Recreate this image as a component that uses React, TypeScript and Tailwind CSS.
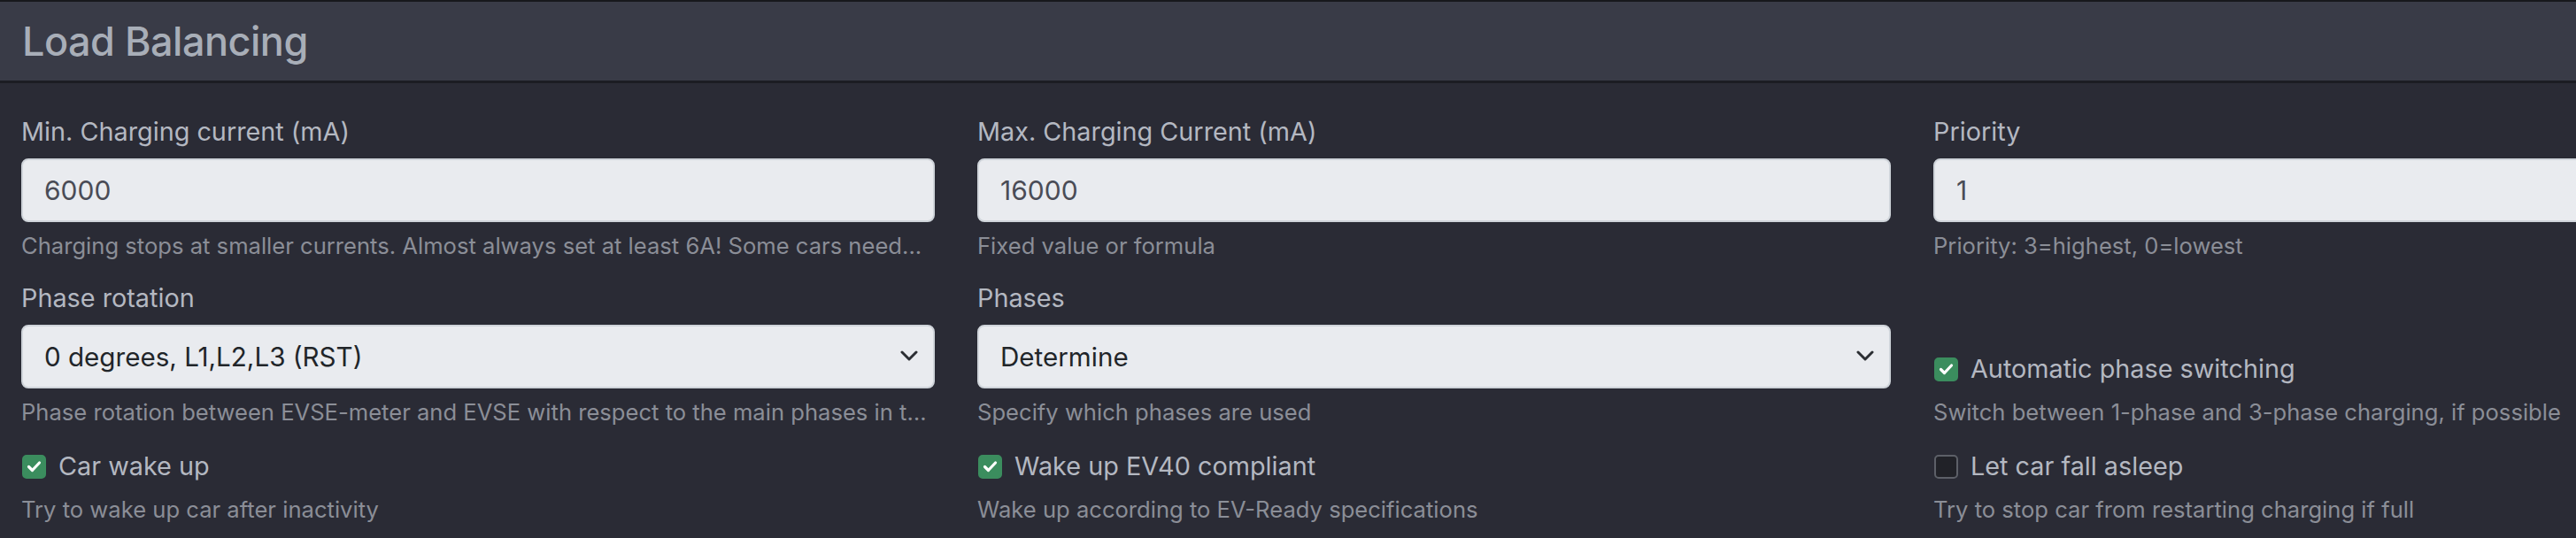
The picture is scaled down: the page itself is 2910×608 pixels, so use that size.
import type { ReactNode } from "react";

const font = { fontFamily: "Inter, 'Noto Sans', sans-serif" };

const Label = ({ children }: { children: ReactNode }) => (
	<div className="h-[44px] text-[28.8px] leading-[44px] text-[#b4b8c1] mb-[8px]">{children}</div>
);

const Help = ({ children }: { children: ReactNode }) => (
	<div className="h-[38px] text-[25.6px] leading-[38px] text-[#8b8e97] truncate">{children}</div>
);

const TextInput = ({ value }: { value: string }) => (
	<input
		type="text"
		defaultValue={value}
		className="block w-full h-[72px] rounded-[8px] border-2 border-[#cfd4da] bg-[#e9ebef] px-[24px] text-[30px] text-[#4a4c56] outline-none mb-[8px]"
	/>
);

const Select = ({ value }: { value: string }) => (
	<div className="relative mb-[8px]">
		<select
			defaultValue={value}
			className="block w-full h-[72px] appearance-none rounded-[8px] border-2 border-[#cfd4da] bg-[#e9ebef] px-[24px] text-[29.6px] text-[#212529] outline-none"
		>
			<option>{value}</option>
		</select>
		<svg
			className="absolute right-[19px] top-[29px] pointer-events-none"
			width="20"
			height="13"
			viewBox="0 0 20 13"
			fill="none"
		>
			<path d="M2 2l8 8 8-8" stroke="#2b2e33" strokeWidth="3" strokeLinecap="round" strokeLinejoin="round" />
		</svg>
	</div>
);

const Check = ({ checked, label }: { checked: boolean; label: string }) => (
	<div className="flex items-center h-[44px] mb-[8px]">
		<span
			className={
				checked
					? "ml-px flex items-center justify-center w-[27px] h-[27px] rounded-[5px] bg-[#3b8d5e] border-2 border-[#3b8d5e]"
					: "ml-px w-[27px] h-[27px] rounded-[5px] bg-[#212228] border-2 border-[#5d6068]"
			}
		>
			{checked && (
				<svg width="17" height="14" viewBox="0 0 17 14" fill="none">
					<path d="M2.5 7.5l4 4 8-8.5" stroke="#ffffff" strokeWidth="3.2" strokeLinecap="round" strokeLinejoin="round" />
				</svg>
			)}
		</span>
		<span className="ml-[14px] text-[28.8px] leading-[44px] text-[#b4b8c1]">{label}</span>
	</div>
);

export default function App() {
	return (
		<div className="w-[2910px] h-[608px] overflow-hidden bg-[#2a2b35]" style={font}>
			<div className="h-[2px] bg-[#17181c]" />
			<div className="h-[92px] flex items-center px-[25px] bg-[#393b47] border-b-[3px] border-[#1c1d23]">
				<h1 className="text-[45px] leading-none font-medium text-[#a8aeb8] tracking-[-0.5px]">Load Balancing</h1>
			</div>

			<div className="pt-[33px] w-[3240px] grid grid-cols-[1080px_1080px_1080px]">
				<div className="px-[24px] mb-[18px]">
					<Label>Min. Charging current (mA)</Label>
					<TextInput value="6000" />
					<Help>Charging stops at smaller currents. Almost always set at least 6A! Some cars need...</Help>
				</div>
				<div className="px-[24px] mb-[18px]">
					<Label>Max. Charging Current (mA)</Label>
					<TextInput value="16000" />
					<Help>Fixed value or formula</Help>
				</div>
				<div className="px-[24px] mb-[18px]">
					<Label>Priority</Label>
					<TextInput value="1" />
					<Help>Priority: 3=highest, 0=lowest</Help>
				</div>

				<div className="px-[24px] mb-[20px]">
					<Label>Phase rotation</Label>
					<Select value="0 degrees, L1,L2,L3 (RST)" />
					<Help>Phase rotation between EVSE-meter and EVSE with respect to the main phases in the installation</Help>
				</div>
				<div className="px-[24px] mb-[20px]">
					<Label>Phases</Label>
					<Select value="Determine" />
					<Help>Specify which phases are used</Help>
				</div>
				<div className="px-[24px] mb-[20px] flex flex-col justify-end">
					<Check checked label="Automatic phase switching" />
					<Help>Switch between 1-phase and 3-phase charging, if possible</Help>
				</div>

				<div className="px-[24px]">
					<Check checked label="Car wake up" />
					<Help>Try to wake up car after inactivity</Help>
				</div>
				<div className="px-[24px]">
					<Check checked label="Wake up EV40 compliant" />
					<Help>Wake up according to EV-Ready specifications</Help>
				</div>
				<div className="px-[24px]">
					<Check checked={false} label="Let car fall asleep" />
					<Help>Try to stop car from restarting charging if full</Help>
				</div>
			</div>
		</div>
	);
}
